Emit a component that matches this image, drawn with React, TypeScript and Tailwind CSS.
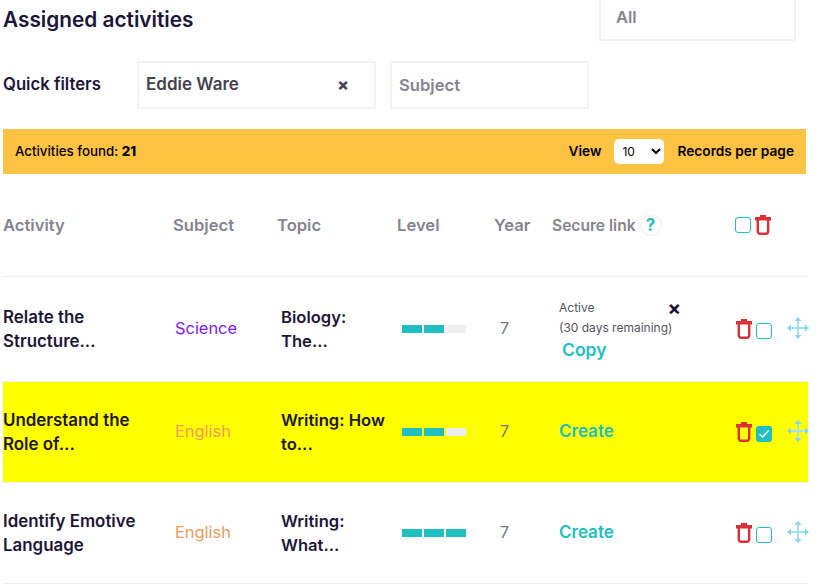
const font = "[font-family:Inter,'Liberation_Sans',sans-serif]";

function Trash() {
  return (
    <svg width="16" height="20" viewBox="0 0 16 20" fill="none" className="block shrink-0">
      <path d="M5 0h6v2h5v3.5H0V2h5z" fill="#dc3039" />
      <path d="M2.8 5v11.5a2.2 2.2 0 0 0 2.2 2.2h6a2.2 2.2 0 0 0 2.2-2.2V5" stroke="#dc3039" strokeWidth="2.4" />
    </svg>
  );
}

function Move() {
  return (
    <svg width="22" height="22" viewBox="0 0 22 22" fill="none" className="block shrink-0">
      <path d="M11 2v18M2 11h18" stroke="#a5e0f2" strokeWidth="2" />
      <path d="M11 0l3.6 4H7.4zM11 22l3.6-4H7.4zM0 11l4-3.6v7.2zM22 11l-4-3.6v7.2z" fill="#86d6ee" />
    </svg>
  );
}

function Box({ checked }: { checked?: boolean }) {
  return checked ? (
    <span className="flex h-4 w-4 shrink-0 items-center justify-center rounded-[3px] bg-[#20bfc1]">
      <svg width="12" height="10" viewBox="0 0 12 10" fill="none">
        <path d="M1.5 5.2 4.6 8l6-6.5" stroke="#fff" strokeWidth="1.5" />
      </svg>
    </span>
  ) : (
    <span className="block h-4 w-4 shrink-0 rounded-[3px] border border-[#20bfc1]" />
  );
}

function Level({ n }: { n: number }) {
  return (
    <div className="flex gap-0.5">
      {[0, 1, 2].map((i) => (
        <span key={i} className={i < n ? "h-2 w-5 bg-[#20bfc1]" : "h-2 w-5 bg-[#eeeeee]"} />
      ))}
    </div>
  );
}

const rows = [
  { a: ["Relate the", "Structure..."], s: "Science", sc: "text-[#8216f5]", t: ["Biology:", "The..."], lv: 2, link: "copy", hl: false, h: "h-[105px]", checked: false },
  { a: ["Understand the", "Role of..."], s: "English", sc: "text-[#ee9a5c]", t: ["Writing: How", "to..."], lv: 2, link: "create", hl: true, h: "h-[101px]", checked: true },
  { a: ["Identify Emotive", "Language"], s: "English", sc: "text-[#ee9a5c]", t: ["Writing:", "What..."], lv: 3, link: "create", hl: false, h: "h-[101px]", checked: false },
];

export default function App() {
  return (
    <div className={`${font} h-[586px] w-[820px] overflow-hidden bg-white pl-[3px] text-[#1e1638]`}>
      <div className="flex w-[793px] items-start justify-between">
        <h1 className="pt-[6px] text-[20.8px] font-semibold leading-7">Assigned activities</h1>
        <div className="-mt-2 flex h-[49px] w-[197px] items-center border-2 border-t-0 border-[#f3f3f3] px-[15px] pt-1 text-[16.5px] font-semibold text-[#85838f]">
          All
        </div>
      </div>

      <div className="mt-[20px] flex items-center">
        <span className="w-[134px] text-[16.7px] font-semibold">Quick filters</span>
        <div className="flex h-12 w-[239px] items-center justify-between border-2 border-[#f3f3f3] pl-[7px] pr-[25px] text-[17px] font-semibold text-[#45434f]">
          <span>Eddie Ware</span>
          <span className="text-[17px] font-extrabold">×</span>
        </div>
        <div className="ml-[14px] flex h-12 w-[199px] items-center border-2 border-[#f3f3f3] pl-[7px] text-[16.6px] font-semibold text-[#85838f]">
          Subject
        </div>
      </div>

      <div className="mt-5 flex h-[45px] w-[803px] items-center justify-between bg-[#ffc343] pl-3 pr-3 text-[13.3px] font-medium text-black">
        <span>
          Activities found: <b className="font-extrabold">21</b>
        </span>
        <div className="flex items-center">
          <span className="text-[13.7px] font-semibold">View</span>
          <select defaultValue="10" className="ml-[13px] mr-[13px] h-[25px] w-[50px] rounded-[5px] bg-white pl-1 text-xs font-normal text-black">
            <option>10</option>
            <option>25</option>
            <option>50</option>
          </select>
          <span className="text-[13.7px] font-semibold">Records per page</span>
        </div>
      </div>

      <div className="grid h-[103px] w-[805px] grid-cols-[170px_104px_120px_97px_58px_183px_73px] items-center border-b border-[#eeeeee] text-[16.6px] font-semibold text-[#85838f]">
        <span>Activity</span>
        <span>Subject</span>
        <span>Topic</span>
        <span>Level</span>
        <span>Year</span>
        <span className="flex items-center gap-[4px] whitespace-nowrap pt-px text-[15.6px]">
          Secure link
          <span className="flex h-[22px] w-[22px] items-center justify-center rounded-full border border-[#eeeeee] text-[17px] font-bold text-[#20bfc1]">?</span>
        </span>
        <span className="flex items-center gap-1">
          <Box />
          <Trash />
        </span>
      </div>

      {rows.map((r, i) => (
        <div
          key={i}
          className={`grid ${r.h} w-[805px] grid-cols-[172px_106px_121px_98px_59px_177px_72px] items-center border-b border-[#eeeeee] ${r.hl ? "bg-[#ffff00]" : "bg-white"}`}
        >
          <div className="text-[16.9px] font-semibold leading-6">
            {r.a[0]}
            <br />
            {r.a[1]}
          </div>
          <div className={`pb-0.5 text-[16.4px] ${r.sc}`}>{r.s}</div>
          <div className="text-[16.6px] font-semibold leading-6">
            {r.t[0]}
            <br />
            {r.t[1]}
          </div>
          <Level n={r.lv} />
          <div className="pb-0.5 text-[16px] text-[#77757f]">7</div>
          {r.link === "copy" ? (
            <div className="pb-px text-[12px] leading-5 text-[#55535f]">
              <div className="flex w-[122px] items-center justify-between">
                <span>Active</span>
                <span className="text-[20px] font-bold leading-none text-[#1e1638]">×</span>
              </div>
              <div>(30 days remaining)</div>
              <div className="mt-0.5 pl-[3px] text-[17.5px] font-semibold text-[#20bfc1]">Copy</div>
            </div>
          ) : (
            <div className="text-[17px] font-semibold text-[#20bfc1]">Create</div>
          )}
          <div className="flex items-center">
            <Trash />
            <span className="ml-1 mt-1">
              <Box checked={r.checked} />
            </span>
            <span className="mb-0.5 ml-[15px]">
              <Move />
            </span>
          </div>
        </div>
      ))}
    </div>
  );
}
